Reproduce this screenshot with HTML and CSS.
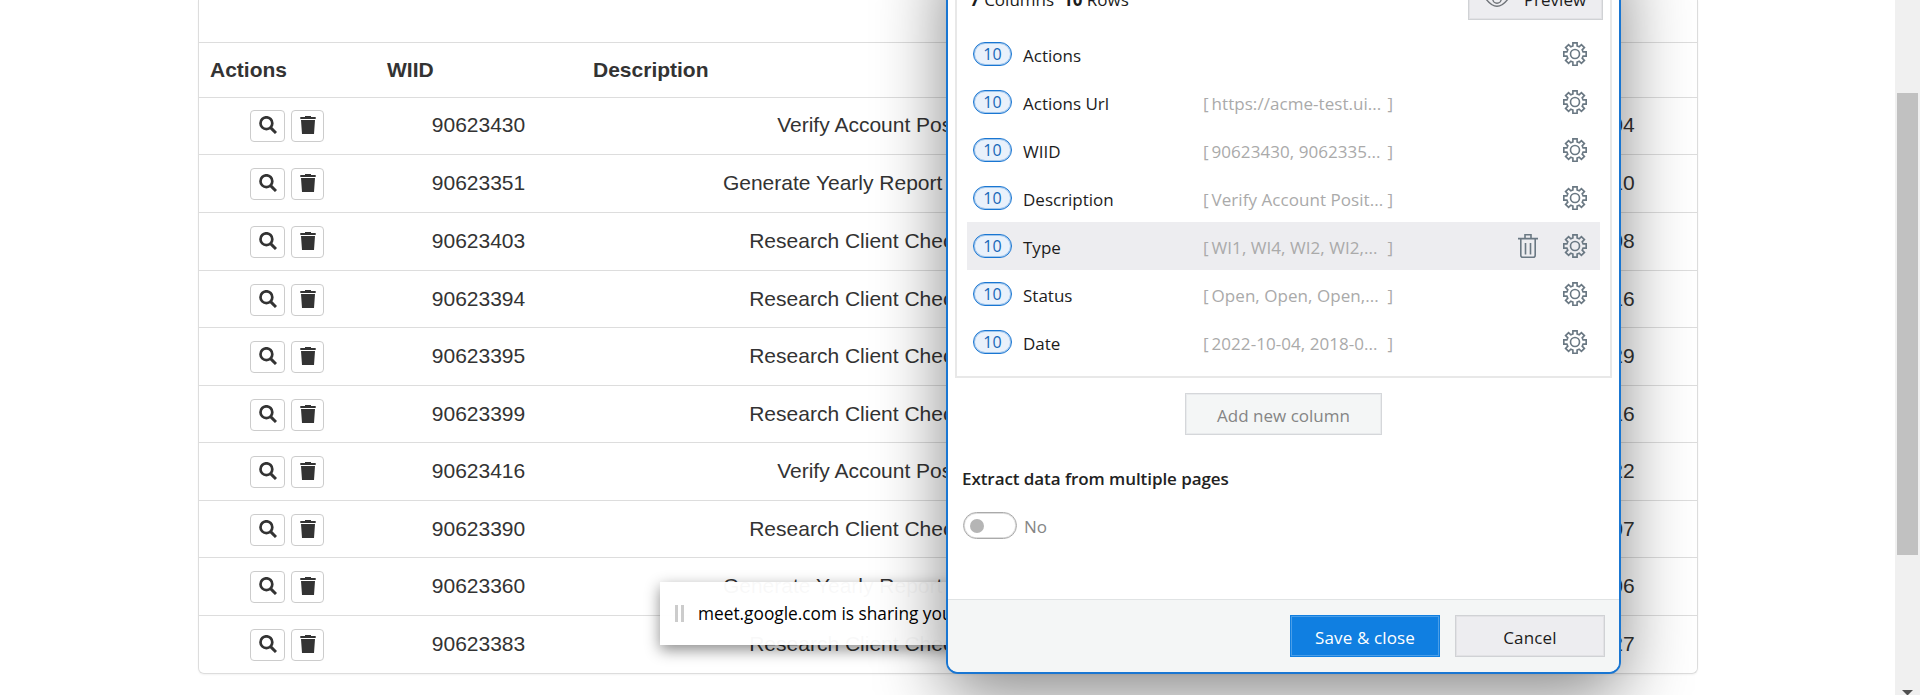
FILE: index.html
```html
<!DOCTYPE html>
<html lang="en">
<head>
<meta charset="utf-8">
<title>Work Items</title>
<link rel="stylesheet" href="styles.css">
</head>
<body>
<svg width="0" height="0" class="defs">
  <symbol id="search" viewBox="0 0 18 18"><circle cx="7.4" cy="7.2" r="5.9" fill="none" stroke="currentColor" stroke-width="2.7"/><path d="M11.6 11.6L17 17" stroke="currentColor" stroke-width="3"/></symbol>
  <symbol id="trash" viewBox="0 0 16 18"><path d="M5 0h6v1h4.700v2H.3V1H5zM1 4h14l-1 14H2z" fill="currentColor"/></symbol>
  <symbol id="gear" viewBox="0 0 24 24"><g fill="none" stroke="currentColor" stroke-width="1.650"><circle cx="12" cy="12" r="4.500"/><path d="M9.900 .8h4.200v3.100l2.100 .9 2.200-2.200 3 3-2.200 2.200 .9 2.100h3.100v4.200h-3.100l-.9 2.100 2.200 2.200-3 3-2.200-2.200-2.100 .9v3.100H9.900v-3.100l-2.100-.9-2.200 2.200-3-3 2.200-2.200-.9-2.100H.8V9.900h3.100l.9-2.100-2.200-2.200 3-3 2.200 2.200 2.100-.9z"/></g></symbol>
  <symbol id="bin" viewBox="0 0 20 24"><path d="M0 4.600h20M7 4.500V.8h6v3.700M2.800 4.500v16.700q0 2 2 2h10.400q2 0 2-2V4.500M7.500 9v11.500M12.500 9v11.500" fill="none" stroke="currentColor" stroke-width="1.600"/></symbol>
  <symbol id="eye" viewBox="0 0 24 16"><path d="M1 8Q12-6.500 23 8Q12 22.500 1 8z" fill="none" stroke="currentColor" stroke-width="1.400"/><circle cx="12" cy="8" r="4.200" fill="none" stroke="currentColor" stroke-width="1.400"/></symbol>
</svg>
<main class="page">
  <section class="table" id="table">
    <div class="row head"><b>Actions</b><b>WIID</b><b>Description</b><b></b><b></b></div>
  </section>
</main>
<aside class="scrollbar"><div class="thumb"></div><svg class="arrow" width="11" height="5"><path d="M0 0h11L5.500 5.500z" fill="#505050"/></svg></aside>
<div class="share"><i></i><i></i><span>meet.google.com is sharing your screen.</span></div>
<div class="modal">
  <div class="content">
    <div class="box">
      <div class="summary"><span class="counts"><b>7</b> Columns&nbsp; <b>10</b> Rows</span><button class="btn preview"><svg width="24" height="16"><use href="#eye"/></svg><span>Preview</span></button></div>
      <div id="fields"></div>
    </div>
    <button class="btn add"><span>Add new column</span></button>
    <h2><span>Extract data from multiple pages</span></h2>
    <div class="switch"><i></i><span>No</span></div>
  </div>
  <footer><button class="btn save"><span>Save &amp; close</span></button><button class="btn cancel"><span>Cancel</span></button></footer>
</div>
<script src="app.js"></script>
</body>
</html>
```
FILE: styles.css
```css
* { box-sizing: border-box; }
body { margin: 0; height: 695px; overflow: hidden; display: flex; background: #fff; position: relative; color: #333; font: 21px "Liberation Sans", Arial, sans-serif; }
.defs { position: absolute; }
.page { flex: 1; padding-left: 198px; }
.table { width: 1500px; height: 674px; padding-top: 42px; border: 1px solid #ddd; border-top: 0; border-radius: 0 0 6px 6px; box-shadow: 0 1px 2px rgba(0,0,0,.05); }
.row { display: grid; grid-template-columns: 177px 205px 606px 278px 232px; height: 58px; border-top: 1px solid #ddd; text-align: center; line-height: 24px; padding-top: 16px; white-space: nowrap; }
.row.short { height: 57px; }
.row.first { padding-top: 15px; }
.row.head { height: 55px; text-align: left; padding-top: 15px; }
.row.head b { padding-left: 11px; }
.row.head b:nth-child(3) { padding-left: 12px; }
.tools { display: flex; justify-content: center; gap: 6px; margin-top: -3px; padding-right: 1px; }
.tools span { height: 32px; width: 35px; border: 1px solid #ccc; border-radius: 4px; display: flex; justify-content: center; padding-top: 5px; }
.tools span + span { width: 33px; }
.scrollbar { width: 25px; background: #f0f0f0; padding: 93px 2px 0; display: flex; flex-direction: column; align-items: center; }
.thumb { width: 21px; height: 462px; background: #c1c1c1; }
.arrow { margin-top: 135px; }
.share { position: absolute; left: 660px; top: 582px; width: 500px; height: 63px; background: rgba(255,255,255,.97); box-shadow: 0 5px 14px rgba(0,0,0,.45); display: flex; align-items: center; gap: 3px; padding-left: 15px; font: 17.3px "Open Sans", sans-serif; color: #000; white-space: nowrap; }
.share i { width: 3px; height: 17px; background: #ccc; }
.share span { margin-left: 11px; }
.modal { position: absolute; left: 946px; top: -60px; width: 675px; height: 734px; border: 2px solid #1976d2; border-radius: 12px; background: #fff; box-shadow: 0 20px 70px rgba(0,0,0,.48); overflow: hidden; display: flex; flex-direction: column; font: 17px/24px "Open Sans", sans-serif; color: #1c1c1c; white-space: nowrap; }
.content { flex: 1; padding: 0 7px; display: flex; flex-direction: column; }
.box { height: 436px; width: 657px; border: 2px solid #e8e8e8; padding: 0 10px; }
.summary { height: 86px; padding: 34px 0 0 3px; display: flex; justify-content: space-between; }
.counts { padding-top: 10px; }
.btn { border: 1px solid #d0d2d5; background: #ededf0; font: inherit; color: #1c1c1c; height: 42px; padding: 0; display: flex; align-items: center; justify-content: center; box-shadow: inset 0 0 0 1px #e2e2e5; }
.preview { width: 135px; gap: 15px; margin-right: -3px; }
.preview svg { color: #6f7378; }
.preview span { padding-top: 1px; }
.field { display: grid; grid-template-columns: 39px 191px 190px 1fr 45px 24px; height: 48px; padding: 12px 13px 0 6px; }
.field.active { background: #ededf0; }
.pill { height: 24px; border: 1px solid #1976d2; box-shadow: inset 0 0 0 1px rgba(25,118,210,.35); border-radius: 12px; background: #e9f1fb; color: #1767b8; text-align: center; font-size: 16px; line-height: 22px; }
.name { padding: 2px 0 0 11px; }
.sample { display: flex; color: #aaa; padding-top: 2px; }
.sample span:nth-child(2) { margin-left: 3px; letter-spacing: .05px; }
.sample span:nth-child(3) { margin-left: auto; }
.field svg { color: #6a7883; }
.field .gear { grid-column: 6; }
.add { width: 197px; margin: 15px 0 0 230px; background: #f4f6f6; color: #858585; border-color: #d5d7da; box-shadow: inset 0 0 0 1px #e9ebed; }
.add span { padding-top: 3px; }
h2 { font-size: 17px; font-weight: 600; letter-spacing: -.07px; margin: 32px 0 0 7px; line-height: 24px; color: #222; }
.switch { display: flex; align-items: center; margin: 20px 0 0 8px; color: #858585; height: 28px; }
.switch i { width: 54px; height: 27px; border: 1px solid #aaa; box-shadow: inset 0 0 0 1px #ddd; border-radius: 14px; margin-right: 7px; padding: 6px; }
.switch i::before { content: ""; display: block; width: 14px; height: 14px; border-radius: 7px; background: #b5b5b5; }
.switch span { padding-top: 3px; }
footer { height: 73px; background: #f4f6f6; border-top: 1px solid #e0e3e4; display: flex; justify-content: flex-end; gap: 15px; padding: 15px 14px 0 0; }
footer .btn { width: 150px; }
footer span { padding-top: 4px; letter-spacing: .15px; }
.save { background: #107fe1; border-color: #107fe1; color: #fff; box-shadow: inset 0 0 0 1px #4a9ee8; }
```
FILE: app.js
```
const V = "Verify Account Position", G = "Generate Yearly Report for Vendor", R = "Research Client Check Copy";
const rows = [
  ["90623430", V, "2022-10-04"], ["90623351", G, "2018-01-10"], ["90623403", R, "2019-02-08"],
  ["90623394", R, "2017-05-16"], ["90623395", R, "2019-06-29"], ["90623399", R, "2018-07-16"],
  ["90623416", V, "2016-12-22"], ["90623390", R, "2017-09-07"], ["90623360", G, "2018-03-06"], ["90623383", R, "2019-08-27"]
];
const short = [0, 3, 5, 7];
document.getElementById("table").insertAdjacentHTML("beforeend", rows.map(([id, d, date], i) =>
  `<div class="row ${short.includes(i) ? "short" : ""} ${i ? "" : "first"}"><div class="tools"><span><svg width="18" height="18"><use href="#search"/></svg></span><span><svg width="16" height="18"><use href="#trash"/></svg></span></div><div>${id}</div><div>${d}</div><div></div><div>${date}</div></div>`).join(""));
const fields = [["Actions", ""], ["Actions Url", "https://acme-test.ui..."], ["WIID", "90623430, 9062335..."],
  ["Description", "Verify Account Posit..."], ["Type", "WI1, WI4, WI2, WI2,..."], ["Status", "Open, Open, Open,..."], ["Date", "2022-10-04, 2018-0..."]];
document.getElementById("fields").innerHTML = fields.map(([n, s]) =>
  `<div class="field ${n === "Type" ? "active" : ""}"><span class="pill">10</span><span class="name">${n}</span><span class="sample">${s ? `<span>[</span><span>${s}</span><span>]</span>` : ""}</span><span></span>${n === "Type" ? '<svg width="20" height="24"><use href="#bin"/></svg>' : ""}<svg class="gear" width="24" height="24"><use href="#gear"/></svg></div>`).join("");
```
